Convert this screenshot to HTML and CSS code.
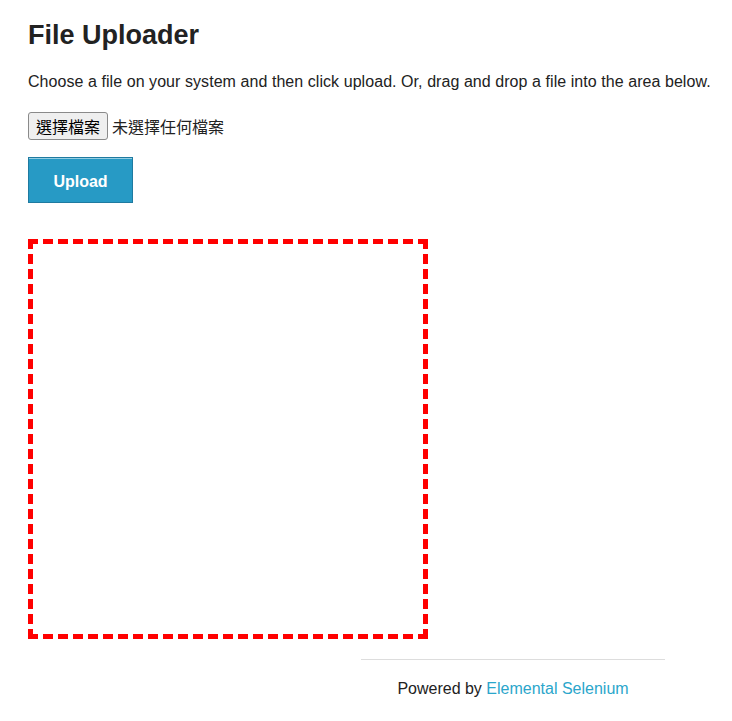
FILE: index.html
```html
<!DOCTYPE html>
<html lang="en">
<head>
<meta charset="utf-8">
<title>The Internet</title>
<link rel="stylesheet" href="styles.css">
</head>
<body>
<div class="content">
  <h3 class="title">File Uploader</h3>
  <p class="intro">Choose a file on your system and then click upload. Or, drag and drop a file into the area below.</p>
  <div class="file-row">
    <button class="file-btn" type="button">選擇檔案</button>
    <span class="file-status">未選擇任何檔案</span>
  </div>
  <button class="upload-btn" type="button">Upload</button>
  <div class="drop-area"></div>
</div>
<div class="footer">
  <hr class="footer-rule">
  <div class="footer-text">Powered by <a class="footer-link" href="#">Elemental Selenium</a></div>
</div>
</body>
</html>
```

FILE: styles.css
```css
html, body {
  margin: 0;
  padding: 0;
  background: #fff;
}
body {
  font-family: "Liberation Sans", Arial, sans-serif;
  color: #222;
  font-size: 16px;
}
.content {
  padding: 18px 0 0 28px;
}
.title {
  margin: 0;
  font-size: 27px;
  line-height: 34px;
  font-weight: bold;
  color: #222;
}
.intro {
  margin: 20px 0 0;
  font-size: 16px;
  line-height: 20px;
  letter-spacing: 0.06px;
}
.file-row {
  margin-top: 20px;
  display: flex;
  align-items: center;
  gap: 4px;
  height: 28px;
}
.file-btn {
  box-sizing: border-box;
  width: 80px;
  height: 28px;
  padding: 0;
  background: #efefef;
  border: 1px solid #8a8a8a;
  border-radius: 3px;
  font-family: "Noto Sans CJK TC", sans-serif;
  font-size: 16px;
  color: #000;
}
.file-status {
  font-family: "Noto Sans CJK TC", sans-serif;
  font-size: 16px;
  color: #222;
}
.upload-btn {
  display: block;
  box-sizing: border-box;
  margin-top: 17px;
  width: 105px;
  height: 46px;
  padding: 3px 0 0;
  background: #279ac5;
  border: 1px solid #1f7aa0;
  box-shadow: inset 0 1px 0 rgba(255, 255, 255, 0.5);
  color: #fff;
  font-family: "Liberation Sans", Arial, sans-serif;
  font-size: 16px;
  font-weight: bold;
}
.drop-area {
  box-sizing: border-box;
  margin-top: 36px;
  width: 400px;
  height: 400px;
  border: 5px dashed #f00;
}
.footer {
  width: 304px;
  margin: 20px 0 0 361px;
}
.footer-rule {
  margin: 0;
  border: 0;
  border-top: 1px solid #ddd;
  height: 0;
}
.footer-text {
  text-align: center;
  margin-top: 19px;
  font-size: 16px;
  line-height: 20px;
}
.footer-link {
  color: #2ba6cb;
  text-decoration: none;
}
```
